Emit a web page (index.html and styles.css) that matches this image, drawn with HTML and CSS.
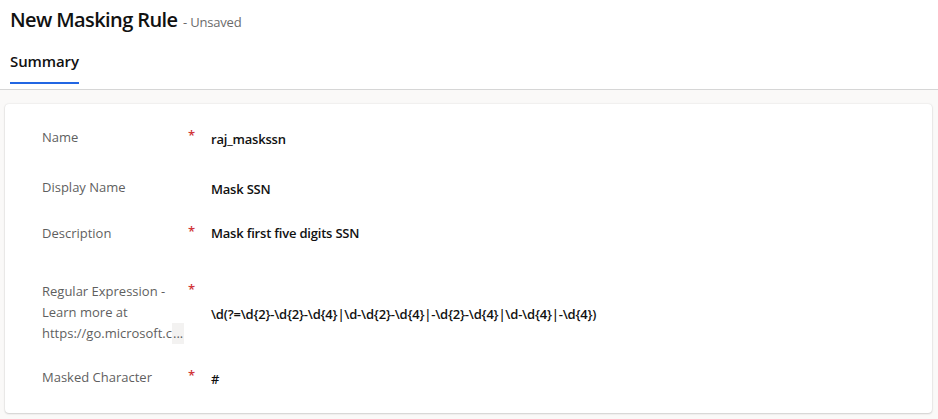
FILE: index.html
```html
<!DOCTYPE html>
<html lang="en">
<head>
<meta charset="utf-8">
<title>New Masking Rule</title>
<link rel="stylesheet" href="styles.css">
</head>
<body>
<header class="header">
  <h1 class="title">New Masking Rule <span class="status">- Unsaved</span></h1>
  <nav class="tabs">
    <span class="tab active">Summary</span>
  </nav>
</header>
<main class="content">
  <section class="card">
    <div class="row r-name">
      <div class="label">Name</div>
      <div class="req">*</div>
      <div class="value">raj_maskssn</div>
    </div>
    <div class="row r-display">
      <div class="label">Display Name</div>
      <div class="req"></div>
      <div class="value">Mask SSN</div>
    </div>
    <div class="row r-desc">
      <div class="label">Description</div>
      <div class="req">*</div>
      <div class="value flat">Mask first five digits SSN</div>
    </div>
    <div class="row r-regex">
      <div class="label">Regular Expression -<br>Learn more at<br>https://go.microsoft.c<span class="more">...</span></div>
      <div class="req">*</div>
      <div class="value center">\d(?=\d{2}-\d{2}-\d{4}|\d-\d{2}-\d{4}|-\d{2}-\d{4}|\d-\d{4}|-\d{4})</div>
    </div>
    <div class="row r-mask">
      <div class="label">Masked Character</div>
      <div class="req">*</div>
      <div class="value">#</div>
    </div>
  </section>
</main>
</body>
</html>
```
FILE: styles.css
```css
html, body {
  margin: 0;
  padding: 0;
}
body {
  width: 938px;
  height: 419px;
  overflow: hidden;
  background: #faf9f8;
  font-family: "Open Sans", "Noto Sans", sans-serif;
  color: #242424;
}
.header {
  background: #ffffff;
  border-bottom: 1px solid #d6d6d6;
  padding: 7px 10px 0 10px;
  height: 82px;
  box-sizing: content-box;
}
.title {
  margin: 0;
  font-size: 20px;
  font-weight: 600;
  line-height: 26px;
  color: #111;
  letter-spacing: -0.6px;
}
.status {
  font-size: 13px;
  font-weight: 400;
  color: #6b6b6b;
  margin-left: 1px;
  letter-spacing: -0.2px;
}
.tabs {
  display: flex;
  margin-top: 15px;
}
.tab {
  font-size: 15px;
  font-weight: 600;
  line-height: 22px;
  color: #111;
  padding-bottom: 10px;
  border-bottom: 2px solid transparent;
  letter-spacing: -0.1px;
}
.tab.active {
  border-bottom-color: #2266e3;
}
.content {
  padding: 14px 6px 0 5px;
}
.card {
  background: #ffffff;
  border-radius: 4px;
  box-shadow: 0 0 2px rgba(0,0,0,0.12), 0 1px 2px rgba(0,0,0,0.14);
  padding: 23px 0 26px 37px;
  height: 309px;
  box-sizing: border-box;
}
.row {
  display: grid;
  grid-template-columns: 146px 23px 1fr;
  align-items: start;
}
.r-name { height: 50px; }
.r-display { height: 46px; }
.r-desc { height: 58px; }
.r-regex { height: 86px; }
.r-mask { height: 20px; }
.label {
  font-size: 13px;
  line-height: 21px;
  color: #5f5f5f;
  margin-top: -0.5px;
}
.more {
  background: #f3f2f1;
  display: inline-block;
  padding: 0 1px;
  line-height: 21px;
}
.req {
  color: #d13438;
  font-size: 13px;
  line-height: 16px;
  font-weight: 600;
}
.value {
  font-size: 13px;
  font-weight: 600;
  line-height: 20px;
  color: #111;
  padding-top: 2px;
  letter-spacing: -0.2px;
}
.value.flat {
  padding-top: 0;
}
.value.center {
  align-self: center;
  padding-top: 2px;
  margin-top: -22px;
}
```
